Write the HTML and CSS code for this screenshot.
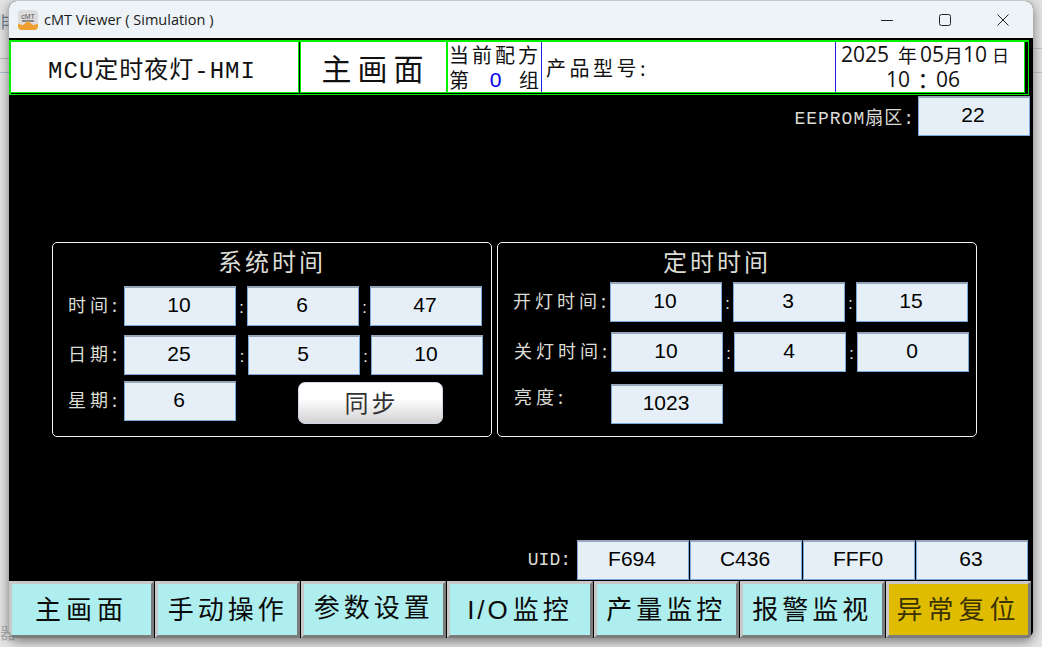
FILE: index.html
```html
<!DOCTYPE html>
<html lang="en">
<head>
    <meta charset="UTF-8">
    <meta name="viewport" content="width=device-width, initial-scale=1.0">
    <title>cMT Viewer</title>
    <link rel="stylesheet" href="styles.css">
</head>
<body>
    <!-- App behind the viewer window -->
    <span class="behind-top">非</span>
    <span class="behind-bottom">器</span>
    <i class="behind-line line-a"></i>
    <i class="behind-line line-b"></i>
    <i class="behind-line line-c"></i>
    <i class="behind-line line-d"></i>

    <div class="window">
        <div class="titlebar">
            <svg class="app-icon" width="20" height="20" viewBox="0 0 20 20">
                <rect width="20" height="20" rx="4" fill="#dcdcdc"/>
                <text x="10" y="8.5" font-size="7" text-anchor="middle" font-family="Liberation Sans" fill="#555">cMT</text>
                <rect x="4" y="10" width="12" height="2" fill="#8a8a8a"/>
                <path d="M0 14 L5 15 L10 11 L15 15 L20 14 V16 Q20 20 16 20 H4 Q0 20 0 16 Z" fill="#f0a030"/>
            </svg>
            <span class="app-title">cMT Viewer ( Simulation )</span>
            <div class="win-controls">
                <svg width="12" height="12" viewBox="0 0 12 12"><path d="M0 6.5H12" stroke="#222" fill="none"/></svg>
                <svg width="12" height="12" viewBox="0 0 12 12"><rect x="0.5" y="0.5" width="11" height="11" rx="2" stroke="#222" fill="none"/></svg>
                <svg width="12" height="12" viewBox="0 0 12 12"><path d="M0.5 0.5L11.5 11.5M11.5 0.5L0.5 11.5" stroke="#222" fill="none"/></svg>
            </div>
        </div>

        <div class="screen">
            <div class="header">
                <div class="head-cell head-name">MCU定时夜灯-HMI</div>
                <div class="head-cell head-page">主画面</div>
                <div class="head-cell head-recipe">
                    <div>当前配方</div>
                    <div class="recipe-line"><span>第</span><b>0</b><span>组</span></div>
                </div>
                <div class="head-cell head-product">产品型号:</div>
                <div class="head-cell head-date">
                    <div class="date-line"><span>2025</span><span class="cjk year">年</span><span>05</span><span class="cjk">月</span><span>10</span><span class="cjk small">日</span></div>
                    <div class="date-line time-line"><span>10</span><span class="cjk colon">：</span><span>06</span></div>
                </div>
            </div>

            <div class="eeprom-row">
                <span class="label eeprom-label">EEPROM扇区:</span>
                <div class="field">22</div>
            </div>

            <div class="panels">
                <div class="panel panel-system">
                    <div class="panel-title">系统时间</div>
                    <div class="row">
                        <span class="label row-label">时间:</span>
                        <div class="field">10</div><span class="sep">:</span>
                        <div class="field">6</div><span class="sep">:</span>
                        <div class="field">47</div>
                    </div>
                    <div class="row row-date">
                        <span class="label row-label">日期:</span>
                        <div class="field">25</div><span class="sep sep-wide">:</span>
                        <div class="field">5</div><span class="sep">:</span>
                        <div class="field">10</div>
                    </div>
                    <div class="row row-week">
                        <span class="label row-label">星期:</span>
                        <div class="field">6</div>
                        <button class="sync-btn">同步</button>
                    </div>
                </div>

                <div class="panel panel-timer">
                    <div class="panel-title">定时时间</div>
                    <div class="row">
                        <span class="label row-label">开灯时间:</span>
                        <div class="field">10</div><span class="sep">:</span>
                        <div class="field">3</div><span class="sep">:</span>
                        <div class="field">15</div>
                    </div>
                    <div class="row row-off">
                        <span class="label row-label">关灯时间:</span>
                        <div class="field">10</div><span class="sep">:</span>
                        <div class="field">4</div><span class="sep">:</span>
                        <div class="field">0</div>
                    </div>
                    <div class="row row-bright">
                        <span class="label row-label">亮度:</span>
                        <div class="field">1023</div>
                    </div>
                </div>
            </div>

            <div class="uid-row">
                <span class="label uid-label">UID:</span>
                <div class="field">F694</div>
                <div class="field">C436</div>
                <div class="field">FFF0</div>
                <div class="field">63</div>
            </div>

            <div class="nav">
                <button class="nav-btn nav-main">主画面</button>
                <button class="nav-btn">手动操作</button>
                <button class="nav-btn nav-high">参数设置</button>
                <button class="nav-btn"><span class="latin">I/O</span>监控</button>
                <button class="nav-btn">产量监控</button>
                <button class="nav-btn">报警监视</button>
                <button class="nav-btn nav-reset">异常复位</button>
            </div>
        </div>
    </div>
</body>
</html>
```

FILE: styles.css
```css
html, body {
    margin: 0;
    height: 100%;
    overflow: hidden;
}

body {
    width: 1042px;
    height: 647px;
    position: relative;
    padding: 1px 0 0 9px;
    box-sizing: border-box;
    background-color: #e4e4e4;
    font-family: "Noto Sans CJK SC", sans-serif;
}

.behind-top, .behind-bottom {
    position: absolute;
    left: -7px;
    font-size: 16px;
    color: #6f7f8f;
}

.behind-top {
    top: 9px;
}

.behind-bottom {
    top: 620px;
    left: 0;
    color: #b0b0b0;
}

.behind-line {
    position: absolute;
    height: 1px;
}

.line-a { left: 0; top: 58px; width: 9px; background-color: #b4b4b4; }
.line-b { left: 0; top: 72px; width: 9px; background-color: #a8bccc; }
.line-c { left: 1033px; top: 48px; width: 9px; background-color: #c4c4c4; }
.line-d { left: 1033px; top: 72px; width: 9px; background-color: #c4c4c4; }

.window {
    width: 1024px;
    height: 637px;
    display: flex;
    flex-direction: column;
    border-radius: 8px;
    overflow: hidden;
    background-color: #000;
    box-shadow: 0 3px 12px rgba(0, 0, 0, 0.5);
    position: relative;
}

.titlebar {
    height: 37px;
    flex-shrink: 0;
    display: flex;
    align-items: center;
    background-color: #edf3f7;
    padding-left: 9px;
}

.app-icon {
    margin-right: 6px;
}

.app-title {
    font-family: "Open Sans", sans-serif;
    font-size: 14.5px;
    color: #1a1a1a;
}

.win-controls {
    margin-left: auto;
    display: flex;
    gap: 46px;
    padding-right: 24px;
}

.screen {
    flex: 1;
    display: flex;
    flex-direction: column;
    background-color: #000;
}

/* header strip: outer green frame, black gap, then green-edged cells */
.header {
    height: 55px;
    flex-shrink: 0;
    display: flex;
    box-sizing: border-box;
    margin: 2px 4px 0 0;
    padding: 0 3px 1px 0;
    background-color: #000;
    border: 1px solid #00f000;
    border-width: 2px 1px 1px 2px;
    color: #111;
}

.head-cell {
    background-color: #fff;
    display: flex;
    align-items: center;
    box-sizing: border-box;
    white-space: nowrap;
    border-bottom: 1px solid #00f000;
}

.head-name {
    width: 288px;
    margin-right: 1px;
    justify-content: center;
    font-size: 24px;
    font-family: "Liberation Mono", "Noto Sans CJK SC", monospace;
    letter-spacing: 1px;
    border-right: 1px solid #00f000;
    padding: 0 5px 0 0;
}

.head-page {
    width: 148px;
    justify-content: center;
    font-size: 30px;
    letter-spacing: 6px;
    border-left: 1px solid #00f000;
    border-right: 2px solid #00f000;
    padding-left: 4px;
}

.head-recipe {
    width: 94px;
    flex-direction: column;
    align-items: stretch;
    justify-content: center;
    font-size: 20px;
    line-height: 25px;
    letter-spacing: 3px;
    border-right: 1px solid #2020e0;
    padding-left: 1px;
}

.recipe-line {
    display: flex;
    justify-content: space-between;
    letter-spacing: 0;
    padding-right: 2px;
}

.recipe-line b {
    font-family: "Liberation Sans", sans-serif;
    font-weight: normal;
    font-size: 21px;
    color: #0000f0;
    margin-left: 3px;
}

.head-product {
    width: 294px;
    padding-left: 4px;
    font-size: 20px;
    letter-spacing: 3.5px;
    border-right: 1px solid #2020e0;
}

.head-date {
    flex: 1;
    flex-direction: column;
    align-items: flex-start;
    justify-content: center;
    font-family: "Open Sans", sans-serif;
    font-size: 21px;
    line-height: 25px;
    border-right: 1px solid #00f000;
    padding-left: 5px;
}

.date-line {
    display: flex;
}

.time-line {
    padding-left: 45px;
}

.cjk {
    font-family: "Noto Sans CJK SC", sans-serif;
    font-size: 19px;
}

.cjk.year {
    margin: 0 3px 0 9px;
}

.cjk.small {
    font-size: 17px;
    margin-left: 5px;
}

.cjk.colon {
    font-family: "Noto Sans CJK TC", sans-serif;
    font-size: 22px;
    margin: 0 2px;
}

/* numeric fields */
.field {
    width: 112px;
    height: 40px;
    flex-shrink: 0;
    box-sizing: border-box;
    display: flex;
    align-items: center;
    justify-content: center;
    padding: 0 2px 4px 0;
    background-color: #e6eff7;
    border: 1px solid #78a8dc;
    border-top: 2px solid #96a6ba;
    font-family: "Liberation Sans", sans-serif;
    font-size: 21px;
    color: #000;
}

.label {
    color: #dcdcd6;
    font-size: 18px;
    letter-spacing: 4px;
    white-space: nowrap;
}

.eeprom-row {
    display: flex;
    justify-content: flex-end;
    align-items: center;
    height: 40px;
    margin-top: 1px;
    padding-right: 3px;
}

.eeprom-label {
    font-family: "Liberation Mono", "Noto Sans CJK SC", monospace;
    letter-spacing: 1px;
    margin-right: 3px;
}

/* time panels */
.panels {
    display: flex;
    gap: 5px;
    margin: 106px 0 0 43px;
}

.panel {
    height: 195px;
    box-sizing: border-box;
    border: 1px solid #f4f4f4;
    border-radius: 5px;
}

.panel-system {
    width: 440px;
    padding-left: 15px;
}

.panel-timer {
    width: 480px;
    padding-left: 15px;
}

.panel-title {
    color: #dcdcd6;
    font-size: 24px;
    letter-spacing: 3px;
    line-height: 36px;
    height: 43px;
    text-align: center;
    padding-right: 15px;
}

.panel-timer .panel-title {
    height: 39px;
    padding-right: 55px;
}

.row {
    display: flex;
    align-items: center;
    height: 40px;
}

.row-label {
    width: 56px;
    flex-shrink: 0;
    padding-bottom: 4px;
}

.panel-timer .row-label {
    width: 97px;
}

.sep {
    width: 11px;
    text-align: center;
    color: #f0f0f0;
    font-size: 16px;
    font-family: "Liberation Sans", sans-serif;
    padding-top: 4px;
}

.sep-wide {
    width: 12px;
}

.row-date {
    margin-top: 9px;
}

.row-week {
    margin-top: 6px;
}

.row-off {
    margin-top: 10px;
    padding-left: 1px;
}

.row-bright {
    margin-top: 12px;
    padding-left: 1px;
}

.panel-timer .row-bright .row-label {
    padding-bottom: 16px;
}

.sync-btn {
    width: 145px;
    height: 42px;
    margin: 3px 0 0 62px;
    padding: 0 0 2px 2px;
    border: 1px solid #cfd8e4;
    border-radius: 7px;
    background: linear-gradient(#fff 40%, #d2d2d2);
    font-family: inherit;
    font-size: 24px;
    letter-spacing: 3px;
    color: #333;
}

/* bottom */
.uid-row {
    display: flex;
    align-items: center;
    gap: 1px;
    margin-top: auto;
    padding-right: 5px;
    justify-content: flex-end;
}

.uid-label {
    font-family: "Liberation Mono", monospace;
    letter-spacing: 0;
    margin-right: 5px;
}

.nav {
    display: flex;
    gap: 1px;
    height: 57px;
    margin-top: 1px;
    padding-right: 2px;
    flex-shrink: 0;
}

.nav-btn {
    flex: 1;
    min-width: 0;
    padding: 0 0 4px;
    box-sizing: border-box;
    border-style: solid;
    border-width: 3px;
    border-color: #c8c8c8 #7c7c7c #7c7c7c #c8c8c8;
    background-color: #aeeeee;
    font-family: "Noto Sans CJK SC", "Liberation Sans", sans-serif;
    font-size: 26px;
    letter-spacing: 4px;
    color: #0a0a0a;
    white-space: nowrap;
}

.nav-main, .nav-reset {
    letter-spacing: 5px;
}

.nav-high {
    padding-bottom: 8px;
}

.latin {
    font-family: "Liberation Sans", sans-serif;
    letter-spacing: 3px;
    margin-right: 2px;
}

.nav-reset {
    background-color: #e0bc00;
    color: #3a3200;
}
```
